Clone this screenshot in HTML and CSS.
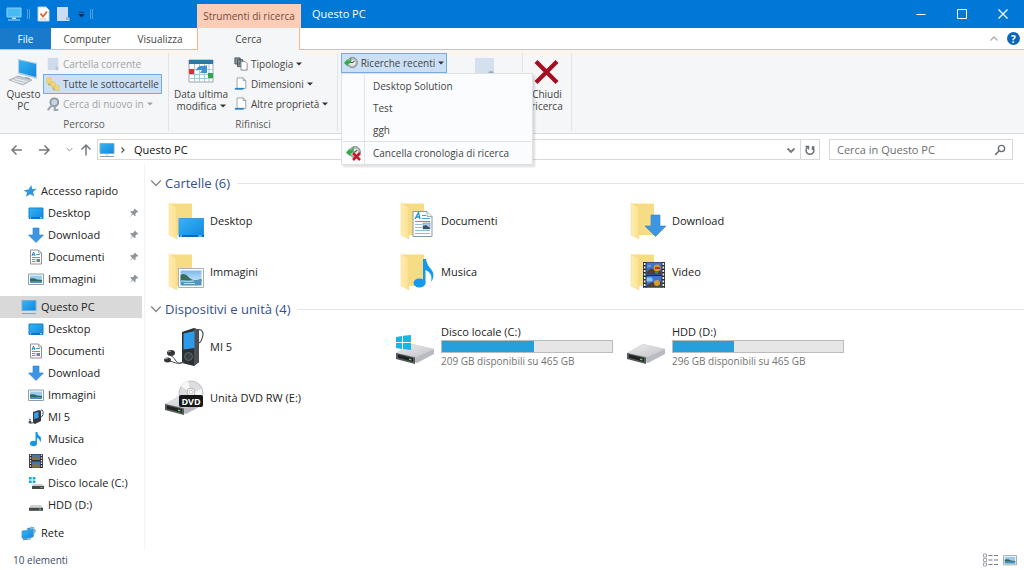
FILE: index.html
```html
<!DOCTYPE html>
<html lang="it">
<head>
<meta charset="utf-8">
<title>Questo PC</title>
<link rel="stylesheet" href="styles.css">
</head>
<body>
<svg class="sprite" aria-hidden="true">
  <defs>
    <linearGradient id="g-blue" x1="0" y1="0" x2="1" y2="1"><stop offset="0" stop-color="#35b4f5"/><stop offset="1" stop-color="#1287dc"/></linearGradient>
    <linearGradient id="g-folder" x1="0" y1="0" x2="1" y2="0"><stop offset="0" stop-color="#ffedb2"/><stop offset="1" stop-color="#fbe08d"/></linearGradient>
    <linearGradient id="g-drive" x1="0" y1="0" x2="1" y2="1"><stop offset="0" stop-color="#ededee"/><stop offset="1" stop-color="#c2c3c7"/></linearGradient>
    <linearGradient id="g-sky" x1="0" y1="0" x2="0" y2="1"><stop offset="0" stop-color="#7db9ec"/><stop offset="1" stop-color="#e3f2fa"/></linearGradient>
  </defs>
  <symbol id="i-pc" viewBox="0 0 16 16"><path d="M1 1.500h14v10H1z" fill="url(#g-blue)" stroke="#7aaed0" stroke-width="1"/><path d="M6 12h4v1.500H6z" fill="#d3e3ec"/><path d="M1 14.500h14" stroke="#8aa0b0"/></symbol>
  <symbol id="i-desktop" viewBox="0 0 16 16"><path d="M1 3h14v10.500H1z" fill="url(#g-blue)" stroke="#1582cf"/><path d="M1.500 12.800h13" stroke="#0a5ea6"/><path d="M2 12.800h1M12 12.800h2" stroke="#d8efff"/></symbol>
  <symbol id="i-down" viewBox="0 0 16 16"><path d="M5 1h6v7h4.500L8 15.500.5 8H5z" fill="#3d96e4" stroke="#2c82cf" stroke-width=".6"/></symbol>
  <symbol id="i-doc" viewBox="0 0 16 16"><path d="M2.500 1h8l3 3v11h-11z" fill="#fff" stroke="#8b9296"/><path d="M10.500 1v3h3" fill="none" stroke="#8b9296" stroke-width=".7"/><path d="M4 7l1.500-4L7 7M4.500 5.700h2" fill="none" stroke="#2489bd"/><path d="M8 5.500h4M4 8.500h8M4 10.500h3.500M4 12.500h3.500" stroke="#4aa0c7"/><path d="M8.500 10h3.500v3H8.500z" fill="#568aa6"/></symbol>
  <symbol id="i-pic" viewBox="0 0 16 16"><path d="M.5 3h15v10.500H.5z" fill="#fff" stroke="#8f9da8"/><path d="M2 4.500h12v7.500H2z" fill="#9accf0"/><path d="M2 7.500q4-1 7 1l5 .5v1H2z" fill="#32675f"/><path d="M2 10h12v2H2z" fill="#4791bf"/></symbol>
  <symbol id="i-player" viewBox="0 0 16 16"><path d="M5 3l6-2 2 1v10l-6 3-2-1z" fill="#333a43"/><path d="M6 4l4.500-1.300v6L6 10z" fill="#369de8"/><path d="M12 3q2-4 3-.500t-2 6M1 13q1 2 5 .5M1 10l2 1" fill="none" stroke="#465058"/><circle cx="2" cy="13" r="1.500" fill="#465058"/></symbol>
  <symbol id="i-note" viewBox="0 0 16 16"><ellipse cx="5.500" cy="12.500" rx="3.500" ry="2.700" fill="#1996e5"/><path d="M7.500 1h1.700q.5 3 3 4.500 2 2.500-.2 6 0-4-3-4.500v5.500H7.500z" fill="#1996e5"/></symbol>
  <symbol id="i-film" viewBox="0 0 16 16"><path d="M1 1h14v14H1z" fill="#303238"/><path d="M4 1.500h8V7H4zM4 8.500h8v6H4z" fill="#3d78bf"/><path d="M4 5l3-2 5 3v1H4zM4 13l3-3 5 3v1.500H4z" fill="#8a713d"/><path d="M2.500 1.500v14M13.500 1.500v14" stroke="#e6e7e8" stroke-width="1.300" stroke-dasharray="1.500 1.200"/></symbol>
  <symbol id="i-hdd" viewBox="0 0 16 16"><path d="M3 8h10l2 3H1z" fill="#d0d1d2"/><path d="M1 10.800h14v3H1z" fill="#45484b"/><path d="M11 12.300h2" stroke="#62d25b"/></symbol>
  <symbol id="i-cdisk" viewBox="0 0 16 16"><path d="M1 2h2.700v2.500H1zM4.700 2h2.700v2.500H4.700zM1 5.500h2.700V8H1zM4.700 5.500h2.700V8H4.700z" fill="#14a7de"/><path d="M5 9h9l2 2H4z" fill="#cecfd0"/><path d="M4 11h12v3H4z" fill="#45484b"/><path d="M12.500 12.500h2" stroke="#62d25b"/></symbol>
  <symbol id="i-net" viewBox="0 0 16 16"><path d="M6 3l7-1v9l-4 2z" fill="#4a9bcd"/><path d="M10 1l5.500 4.500L12 11l-3-5z" fill="#83bbd5"/><path d="M1 6l11-1.500v7.500l-9 2-2-1z" fill="url(#g-blue)" stroke="#3b8fc4" stroke-width=".6"/><path d="M2 14.800l8-1" stroke="#5f8aa3"/></symbol>
  <symbol id="i-star" viewBox="0 0 16 16"><path d="M9.500 1l1 4.800 5-.3-4 3.500 1.300 5-4.600-2.400-4.700 3 1-5L.8 7l5.400-.8z" fill="#3596e0"/></symbol>
  <symbol id="i-pin" viewBox="0 0 16 16"><path d="M9.500 1l5.500 5.500-1.500.8-1-.5-2.300 2.400.3 3-1.300.8-3-3L1 15l4-6-3-3 1-1.200 3 .2 2.500-2.300-.4-1z" fill="#8c9399"/></symbol>
  <symbol id="i-folder" viewBox="0 0 40 40"><path d="M4 2h23v32H10z" fill="#f7dc86"/><path d="M4 2l8 4v32l-8-4z" fill="url(#g-folder)" stroke="#efd27c" stroke-width=".4"/><path d="M4 2h23v1H6z" fill="#fff0b8"/></symbol>
  <symbol id="i-drive" viewBox="0 0 40 24"><path d="M1 11L17 2l22 5v5l-17 9L1 16z" fill="#b9bbc0"/><path d="M1 11L18 2l21 5-17 8z" fill="url(#g-drive)"/><path d="M1 11l19 4.500V22L1 17z" fill="#55585a"/><path d="M3 12.500l15 3.800v3.500L3 15.800z" fill="#202325"/><path d="M14 17.200l2.500.600" stroke="#5bdc57" stroke-width="1.200"/></symbol>
  <symbol id="i-caret" viewBox="0 0 6 4"><path d="M0 .5h6L3 3.500z" fill="currentColor"/></symbol>
  <symbol id="i-chev" viewBox="0 0 10 10"><path d="M1 3l4 4 4-4" fill="none" stroke="currentColor" stroke-width="1.200"/></symbol>
  <symbol id="i-page" viewBox="0 0 16 16"><path d="M3.500 1h7l3 3v9h-10z" fill="#fff" stroke="#8d9aa6"/><path d="M10.500 1v3h3" fill="none" stroke="#8d9aa6"/><path d="M1 12.500h10v2H1z" fill="#2b83bd"/></symbol>
  <symbol id="i-history" viewBox="0 0 16 16"><circle cx="9.500" cy="7.500" r="5.800" fill="#b8bdc0" stroke="#788086"/><circle cx="9.500" cy="7.500" r="3.600" fill="#e7e9ea"/><path d="M9.500 7.500l2.500-2M9.500 7.500H7" stroke="#555" stroke-width="1.200"/><path d="M0 8l4-4.500V6q3-1 4.500-4.500Q9 8 4.500 9.500V12z" fill="#32ab45"/></symbol>
  <symbol id="i-mag" viewBox="0 0 16 16"><circle cx="10" cy="6" r="4.200" fill="none" stroke="currentColor" stroke-width="1.800"/><path d="M7 9l-5.500 5.500" stroke="currentColor" stroke-width="2"/></symbol>
</svg>

<div class="window">
  <header class="titlebar">
    <div class="quick">
      <svg class="ic16" viewBox="0 0 16 16"><path d="M1 2h14v9H1z" fill="#48baf4" stroke="#8bd2fb"/><path d="M6 11.500h4V13H6zM2 13.500h12v1H2z" fill="#b9e0f6"/></svg>
      <span class="bar"></span>
      <button type="button" aria-label="Proprietà"><svg class="ic16" viewBox="0 0 16 16"><path d="M3 1h8l3 3v11H3z" fill="#fff" stroke="#c2d4df"/><path d="M5.500 7.500l2.500 3 4-5" fill="none" stroke="#e76132" stroke-width="1.800"/><path d="M5 13h7" stroke="#b8c6d2"/></svg></button>
      <button type="button" aria-label="Nuova cartella"><svg class="ic16" viewBox="0 0 16 16"><path d="M1 1h11v10l1.500 1v3H1z" fill="#cadcf0"/><path d="M10 11h3v3h-3z" fill="#9fb4ce"/></svg></button>
      <button type="button" class="qmenu" aria-label="Personalizza"><svg viewBox="0 0 8 8"><path d="M1 1.500h6" stroke="#133d65"/><path d="M0 3.500h8l-4 4z" fill="#102f50"/></svg></button>
      <span class="bar"></span>
    </div>
    <div class="context">Strumenti di ricerca</div>
    <h1 class="title">Questo PC</h1>
    <div class="controls">
      <button type="button" aria-label="Riduci"><svg viewBox="0 0 10 10"><path d="M.5 5.500h9" stroke="#fff"/></svg></button>
      <button type="button" aria-label="Ingrandisci"><svg viewBox="0 0 10 10"><path d="M.5.5h9v9h-9z" stroke="#fff" fill="none"/></svg></button>
      <button type="button" aria-label="Chiudi"><svg viewBox="0 0 10 10"><path d="M.5.5l9 9m0-9l-9 9" stroke="#fff" stroke-width="1.200"/></svg></button>
    </div>
  </header>

  <nav class="tabs">
    <button type="button" class="tab file">File</button>
    <button type="button" class="tab computer">Computer</button>
    <button type="button" class="tab view">Visualizza</button>
    <button type="button" class="tab search-tab">Cerca</button>
    <div class="tabs-end">
      <button type="button" aria-label="Riduci barra multifunzione"><svg class="ic10" viewBox="0 0 10 10"><path d="M1.500 6.500L5 3l3.500 3.500" fill="none" stroke="#a9adb0" stroke-width="1.300"/></svg></button>
      <button type="button" class="help" aria-label="Guida">?</button>
    </div>
  </nav>

  <section class="ribbon">
    <div class="group percorso">
      <div class="group-body">
        <button type="button" class="big pc">
          <svg class="ic32" viewBox="0 0 32 32"><path d="M10 3l19 4v16l-19-5z" fill="#b7cedc"/><path d="M11 4l17 4v13l-17-4.500z" fill="url(#g-blue)"/><path d="M17 21l5 1v3h-6z" fill="#98a7b1"/><path d="M1 24l9-4 14 4-9 5z" fill="#c4cdd4" stroke="#99a5ae" stroke-width=".7"/><path d="M4 24.500l12 3M7 22.700l12 3" stroke="#f5f8fa" stroke-width=".8"/></svg>
          <span>Questo<br>PC</span>
        </button>
        <div class="stack">
          <button type="button" class="cmd off"><svg class="ic14" viewBox="0 0 16 16"><path d="M2 1h12v14H2z" fill="#cfdaea"/><path d="M11 11h3v4h-3z" fill="#b5c4d9"/></svg>Cartella corrente</button>
          <button type="button" class="cmd on"><svg class="ic14" viewBox="0 0 16 16"><path d="M3 6v3h3M8 10v4h3" fill="none" stroke="#b39a55"/><path d="M1 1h4.500v6H1zM6 5.500h4.500v5.500H6zM10.500 10H15v5.500h-4.500z" fill="#f7d766" stroke="#e4ba40" stroke-width=".5"/></svg>Tutte le sottocartelle</button>
          <button type="button" class="cmd off"><svg class="ic14" viewBox="0 0 16 16"><circle cx="9.500" cy="6" r="4.500" fill="#cbd4df" stroke="#8994a5" stroke-width="2"/><path d="M7 9l-5 6M10 10v5h4" stroke="#9aa5b5" stroke-width="2.500" fill="none"/></svg>Cerca di nuovo in<svg class="caret"><use href="#i-caret"/></svg></button>
        </div>
      </div>
      <div class="group-label">Percorso</div>
    </div>
    <div class="group rifinisci">
      <div class="group-body">
        <button type="button" class="big date">
          <svg class="ic32" viewBox="0 0 32 32"><path d="M4 4h24v22H4z" fill="#fff" stroke="#9aa5ac"/><path d="M4 4h24v4H4z" fill="#2e75a8"/><path d="M5 13.500h22M5 18.500h22M5 22.500h22M9.500 8v18M14.500 8v18M19.500 8v18M24 8v18" stroke="#a8c8d3"/><path d="M11 15q1-6 9-5l2-1v8h-7l2-3q-3-1-6 1z" fill="#3e91d0"/><path d="M4 13h5v5H4z" fill="#d93434"/><path d="M23 17h5v5h-5z" fill="#2ea64c"/></svg>
          <span>Data ultima<br>modifica<svg class="caret"><use href="#i-caret"/></svg></span>
        </button>
        <div class="stack">
          <button type="button" class="cmd"><svg class="ic14" viewBox="0 0 16 16"><path d="M1 1h6v7H1zM4 3h6v8H4z" fill="#8b959e" stroke="#495158"/><path d="M8 5h4.500L15 7.500V15H8z" fill="#fff" stroke="#778590"/></svg>Tipologia<svg class="caret"><use href="#i-caret"/></svg></button>
          <button type="button" class="cmd"><svg class="ic14"><use href="#i-page"/></svg>Dimensioni<svg class="caret"><use href="#i-caret"/></svg></button>
          <button type="button" class="cmd"><svg class="ic14"><use href="#i-page"/></svg>Altre proprietà<svg class="caret"><use href="#i-caret"/></svg></button>
        </div>
      </div>
      <div class="group-label">Rifinisci</div>
    </div>
    <div class="group opzioni">
      <div class="recent">
        <button type="button" class="cmd on" aria-expanded="true"><svg class="ic14"><use href="#i-history"/></svg>Ricerche recenti<svg class="caret"><use href="#i-caret"/></svg></button>
        <div class="menu" role="menu">
          <button type="button" role="menuitem"><span class="slot"></span>Desktop Solution</button>
          <button type="button" role="menuitem"><span class="slot"></span>Test</button>
          <button type="button" role="menuitem"><span class="slot"></span>ggh</button>
          <button type="button" role="menuitem" class="clear"><span class="slot"><svg class="ic16" viewBox="0 0 16 16"><use href="#i-history" width="15" height="15"/><path d="M7 8l7 7m0-7l-7 7" stroke="#c81727" stroke-width="2.500"/></svg></span>Cancella cronologia di ricerca</button>
        </div>
      </div>
      <svg class="save" viewBox="0 0 20 20"><path d="M0 0h19v20H0z" fill="#d5e0ef"/><circle cx="16" cy="16" r="3" fill="#9cabbd"/></svg>
    </div>
    <div class="group chiudi">
      <button type="button" class="big">
        <svg class="ic32" viewBox="0 0 32 32"><path d="M5 5.500l21 21M26 5.500l-21 21" stroke="#a30f22" stroke-width="4.200"/></svg>
        <span>Chiudi<br>ricerca</span>
      </button>
    </div>
  </section>

  <div class="navbar">
    <button type="button" aria-label="Indietro"><svg class="ic14" viewBox="0 0 14 14"><path d="M12 7H2m4.500-4.500L2 7l4.500 4.500" fill="none" stroke="#74797d" stroke-width="1.500"/></svg></button>
    <button type="button" aria-label="Avanti"><svg class="ic14" viewBox="0 0 14 14"><path d="M2 7h10M7.500 2.500L12 7l-4.500 4.500" fill="none" stroke="#74797d" stroke-width="1.500"/></svg></button>
    <button type="button" class="hist" aria-label="Percorsi recenti"><svg class="ic6"><use href="#i-chev"/></svg></button>
    <button type="button" class="up" aria-label="Su"><svg class="ic14" viewBox="0 0 14 14"><path d="M7 12.500V2M2.500 6.500L7 2l4.500 4.500" fill="none" stroke="#74797d" stroke-width="1.500"/></svg></button>
    <div class="address">
      <svg class="ic18"><use href="#i-pc"/></svg>
      <svg class="crumb" viewBox="0 0 6 8"><path d="M1.500 1.500L4 4 1.500 6.500" fill="none" stroke="#555" stroke-width="1.200"/></svg>
      <span class="path">Questo PC</span>
      <button type="button" aria-label="Percorsi precedenti"><svg class="ic10" viewBox="0 0 10 10"><path d="M1.500 3.500L5 7l3.500-3.500" fill="none" stroke="#74797d" stroke-width="1.800"/></svg></button>
      <button type="button" class="refresh" aria-label="Aggiorna"><svg class="ic12" viewBox="0 0 12 12"><path d="M8.500 3.200A4 4 0 1 1 3.500 3.200M1.500 2.500h3v3M8.500 6V3h2" fill="none" stroke="#6a6e72" stroke-width="1.400"/></svg></button>
    </div>
    <label class="search">
      <input type="search" placeholder="Cerca in Questo PC" aria-label="Cerca in Questo PC">
      <svg class="ic12"><use href="#i-mag"/></svg>
    </label>
  </div>

  <div class="body">
    <nav class="side">
      <ul>
        <li><a href="#" class="root quickroot"><svg class="ic14"><use href="#i-star"/></svg>Accesso rapido</a></li>
        <li><a href="#"><svg class="ic16"><use href="#i-desktop"/></svg>Desktop<svg class="pin"><use href="#i-pin"/></svg></a></li>
        <li><a href="#"><svg class="ic16"><use href="#i-down"/></svg>Download<svg class="pin"><use href="#i-pin"/></svg></a></li>
        <li><a href="#"><svg class="ic16"><use href="#i-doc"/></svg>Documenti<svg class="pin"><use href="#i-pin"/></svg></a></li>
        <li><a href="#"><svg class="ic16"><use href="#i-pic"/></svg>Immagini<svg class="pin"><use href="#i-pin"/></svg></a></li>
      </ul>
      <ul>
        <li><a href="#" class="root current"><svg class="ic16"><use href="#i-pc"/></svg>Questo PC</a></li>
        <li><a href="#"><svg class="ic16"><use href="#i-desktop"/></svg>Desktop</a></li>
        <li><a href="#"><svg class="ic16"><use href="#i-doc"/></svg>Documenti</a></li>
        <li><a href="#"><svg class="ic16"><use href="#i-down"/></svg>Download</a></li>
        <li><a href="#"><svg class="ic16"><use href="#i-pic"/></svg>Immagini</a></li>
        <li><a href="#"><svg class="ic16"><use href="#i-player"/></svg>MI 5</a></li>
        <li><a href="#"><svg class="ic16"><use href="#i-note"/></svg>Musica</a></li>
        <li><a href="#"><svg class="ic16"><use href="#i-film"/></svg>Video</a></li>
        <li><a href="#"><svg class="ic16"><use href="#i-cdisk"/></svg>Disco locale (C:)</a></li>
        <li><a href="#"><svg class="ic16"><use href="#i-hdd"/></svg>HDD (D:)</a></li>
      </ul>
      <ul>
        <li><a href="#" class="root"><svg class="ic16"><use href="#i-net"/></svg>Rete</a></li>
      </ul>
    </nav>

    <main class="content">
      <h2><svg class="ic12"><use href="#i-chev"/></svg>Cartelle (6)</h2>
      <div class="grid">
        <div class="item"><svg class="ic40" viewBox="-1 0 40 40"><use href="#i-folder" width="40" height="40"/><path d="M14 17.500h25v18H14z" fill="url(#g-blue)" stroke="#3c9cdc"/><path d="M14 35h25" stroke="#07508c" stroke-width="1.300"/><path d="M15 35h2M33 35h4" stroke="#bbe3ff"/></svg><span>Desktop</span></div>
        <div class="item"><svg class="ic40" viewBox="-2 0 40 40"><use href="#i-folder" width="40" height="40"/><path d="M16 10.500h14l5 5v20H16z" fill="#fff" stroke="#8d979f"/><path d="M30 10.500v5h5" fill="#eaf0f3" stroke="#8d979f" stroke-width=".7"/><path d="M18 18l3.500-6.500L23 18M19 16h4" fill="none" stroke="#2691d2" stroke-width="1.300"/><path d="M25 14.500h4M25 17.500h8M18 20.500h15" stroke="#40a3d7" stroke-width="1.200"/><path d="M18 23.500h7M18 26.500h7M18 29.500h15M18 32.500h15" stroke="#93bdd2"/><path d="M26 22h7v6h-7z" fill="#a9cfe8" stroke="#60869b" stroke-width=".6"/><path d="M26 25l3-1 4 3v1h-7z" fill="#345469"/></svg><span>Documenti</span></div>
        <div class="item"><svg class="ic40" viewBox="-1 0 40 40"><use href="#i-folder" width="40" height="40"/><path d="M24 14h9v11h6L28.500 35.500 18 25h6z" fill="#3c96e4" stroke="#2d83ce" stroke-width=".6"/></svg><span>Download</span></div>
        <div class="item"><svg class="ic40" viewBox="-1 0 40 40"><use href="#i-folder" width="40" height="40"/><path d="M13.500 16.500h25v19h-25z" fill="#fff" stroke="#a6b2bb"/><path d="M15.500 18.500h21v15h-21z" fill="url(#g-sky)"/><path d="M15.500 23q4-3 8 2t13 2v2h-21z" fill="#386f5a"/><path d="M15.500 28h21v5.500h-21z" fill="#5096bb"/><path d="M16 29q8 1 13 0M19 31.500h11" stroke="#b9e3ef" fill="none"/></svg><span>Immagini</span></div>
        <div class="item"><svg class="ic40" viewBox="-2 0 40 40"><use href="#i-folder" width="40" height="40"/><ellipse cx="22.500" cy="31" rx="6" ry="4.500" fill="#1599ed"/><path d="M26 7h3q1 6 5 10 5 6 0 13 2-9-5.500-12v13H26z" fill="#1599ed"/></svg><span>Musica</span></div>
        <div class="item"><svg class="ic40" viewBox="-1 0 40 40"><use href="#i-folder" width="40" height="40"/><path d="M16 10h22v26H16z" fill="#292c31"/><path d="M19.500 10.500h15v12h-15zM19.500 24h15v12h-15z" fill="#3e76cf"/><path d="M20 20q3-5 6-3l3-2 5 4v3H20zM20 33l5-3 4 2 5-3v6H20z" fill="#553c35"/><circle cx="30" cy="16" r="3.500" fill="#d39a26"/><path d="M28 16h5" stroke="#ba3030" stroke-width="2"/><path d="M28 20l3 1" stroke="#2c9a4b" stroke-width="2"/><circle cx="30" cy="31" r="3" fill="#d3a02d"/><path d="M20 26h5v3h-5zM20 14h4" fill="#8fc2ef" stroke="#8fc2ef"/><path d="M17.700 11v25M36.300 11v25" stroke="#eff0f0" stroke-width="1.700" stroke-dasharray="2 1.500"/></svg><span>Video</span></div>
      </div>
      <h2><svg class="ic12"><use href="#i-chev"/></svg>Dispositivi e unità (4)</h2>
      <div class="grid">
        <div class="item"><svg class="ic40" viewBox="0 0 40 40"><path d="M31 8q1-7 6-5 4 3 0 11-2 3-4 2" fill="none" stroke="#4d5356" stroke-width="1.200"/><path d="M18 5l12-4 5 2v32l-5 4-12-3z" fill="#2c2f33"/><path d="M30 1l5 2v32l-5 4z" fill="#4b5055"/><path d="M19.500 6.500l11-2.500v17l-11 1.500z" fill="#2e9bea"/><circle cx="24.500" cy="29.500" r="4" fill="#3c4146" stroke="#61676b"/><path d="M6 28q4 2 6 6t8 1M4 33q4 2 8 3t8-1" fill="none" stroke="#4d5356"/><ellipse cx="7" cy="26" rx="4" ry="3" fill="#33373a"/><ellipse cx="3.500" cy="33" rx="3.500" ry="2.500" fill="#33373a"/><path d="M4 25l3-1M1 32l3-1" stroke="#a3a8ab"/></svg><span>MI 5</span></div>
        <div class="item"><svg class="ic40" viewBox="0 0 40 40"><use href="#i-drive" y="15" width="40" height="24"/><path d="M1 10l6-1v6H1zM8 8.800L16 8v7H8zM1 16h6v6l-6-1zM8 16h8v7l-8-1z" fill="#18b5e8"/></svg><div class="disk"><span>Disco locale (C:)</span><div class="usage" role="progressbar" aria-label="Disco locale (C:)" aria-valuenow="54"><div class="fill" style="width:54%"></div></div><small>209 GB disponibili su 465 GB</small></div></div>
        <div class="item"><svg class="ic40" viewBox="0 0 40 40"><use href="#i-drive" y="15" width="40" height="24"/></svg><div class="disk"><span>HDD (D:)</span><div class="usage" role="progressbar" aria-label="HDD (D:)" aria-valuenow="36"><div class="fill" style="width:36%"></div></div><small>296 GB disponibili su 465 GB</small></div></div>
        <div class="item"><svg class="ic40" viewBox="0 0 40 40"><use href="#i-drive" y="15" width="40" height="24"/><circle cx="27" cy="15" r="12" fill="#dcdddf" stroke="#c0c2c5"/><path d="M27 15L17 8q3-4 7-5zM27 15l11-4v7z" fill="#f8f8f9"/><circle cx="27" cy="14" r="4" fill="#eee" stroke="#b9bbbe"/><circle cx="27" cy="14" r="1.700" fill="#fff" stroke="#aaa" stroke-width=".5"/><rect x="15" y="17" width="24" height="12" rx="2" fill="#171717"/><text class="dvd" x="27" y="26.500" text-anchor="middle">DVD</text></svg><span>Unità DVD RW (E:)</span></div>
      </div>
    </main>
  </div>

  <footer class="status">
    <span>10 elementi</span>
    <div class="views">
      <button type="button" aria-label="Dettagli"><svg class="ic16" viewBox="0 0 16 16"><path d="M1.500 2h3v3h-3zM1.500 6.500h3v3h-3zM1.500 11h3v3h-3z" fill="#fff" stroke="#8d9297" stroke-width=".8"/><path d="M6.500 3.500h4M6.500 8h4M6.500 12.500h4M12 3.500h4M12 8h4M12 12.500h4" stroke="#757b80"/></svg></button>
      <button type="button" aria-label="Icone grandi"><svg class="ic14"><use href="#i-pic"/></svg></button>
    </div>
  </footer>
</div>
</body>
</html>
```
FILE: styles.css
```css
* { box-sizing: border-box; }
body {
  margin: 0;
  font: 11px/14px "Open Sans", "Noto Sans", sans-serif;
  color: #222;
  background: #fff;
}
button {
  font: inherit;
  color: inherit;
  border: 0;
  padding: 0;
  margin: 0;
  background: none;
  display: flex;
  align-items: center;
  justify-content: center;
}
ul { list-style: none; margin: 0; padding: 0; }
h1, h2 { margin: 0; font-weight: 400; }
svg { flex: none; display: block; }
.sprite { position: absolute; width: 0; height: 0; }
.ic6 { width: 7px; height: 7px; }
.ic10 { width: 10px; height: 10px; }
.ic12 { width: 12px; height: 12px; }
.ic14 { width: 14px; height: 14px; }
.ic16 { width: 16px; height: 16px; }
.ic18 { width: 18px; height: 16px; }
.ic32 { width: 32px; height: 32px; }
.ic40 { width: 40px; height: 40px; }
.caret { width: 6px; height: 4px; color: #333; }

.window { min-height: 100vh; display: flex; flex-direction: column; }

/* Title bar */
.titlebar { display: flex; height: 28px; background: #0078d7; color: #fff; }
.quick { width: 197px; padding-left: 6px; display: flex; align-items: center; gap: 5px; }
.bar { width: 3px; height: 10px; border: solid #519fdc; border-width: 0 1px; }
.quick .qmenu { width: 8px; }
.qmenu svg { width: 7px; height: 7px; }
.context {
  width: 104px;
  margin-top: 4px;
  display: flex;
  align-items: center;
  justify-content: center;
  background: #fdccb6;
  color: #704c42;
  font-size: 10px;
}
.title { flex: 1; padding-left: 11px; font-size: 11px; line-height: 28px; }
.controls { display: flex; padding-right: 1px; }
.controls button { width: 41px; }
.controls svg { width: 10px; height: 10px; }

/* Tabs */
.tabs {
  display: flex;
  height: 22px;
  font-size: 10px;
  border-bottom: 1px solid #efb891;
  color: #444;
}
.tab.file { width: 51px; background: #1979ca; color: #fff; }
.tab.computer { width: 72px; }
.tab.view { width: 74px; }
.tab.search-tab {
  width: 103px;
  height: 22px;
  background: #f5f6f7;
  border: solid #efb891;
  border-width: 0 1px;
}
.tabs-end { margin-left: auto; padding-right: 4px; display: flex; align-items: center; gap: 8px; }
.help {
  width: 13px;
  height: 13px;
  border-radius: 50%;
  background: #0a66b9;
  color: #fff;
  font-size: 10px;
  font-weight: 700;
}

/* Ribbon */
.ribbon {
  display: flex;
  height: 84px;
  padding: 3px 0 2px;
  background: #f5f6f7;
  border-bottom: 1px solid #dadbdc;
  font-size: 10px;
  color: #444;
}
.group { border-right: 1px solid #e2e3e4; display: flex; flex-direction: column; }
.group-body { display: flex; flex: 1; }
.group-label { text-align: center; line-height: 14px; color: #5a5a5a; }
.percorso { width: 169px; }
.rifinisci { width: 169px; }
.opzioni { width: 185px; padding: 0 0 0 3px; flex-direction: row; align-items: flex-start; }
.chiudi { width: 49px; }
.big { flex-direction: column; justify-content: flex-start; line-height: 12px; padding-top: 3px; }
.big span { text-align: center; }
.big .caret { display: inline-block; margin: 0 0 2px 3px; }
.pc { width: 43px; padding-left: 4px; }
.date { width: 62px; padding-left: 2px; }
.chiudi .big { width: 100%; }
.stack { display: flex; flex-direction: column; align-items: flex-start; padding-top: 1px; }
.cmd {
  height: 20px;
  padding: 0 2px;
  gap: 3px;
  border: 1px solid transparent;
  white-space: nowrap;
}
.cmd.off { color: #a0a3a8; }
.cmd.off .caret { color: #a0a3a8; }
.cmd.on { background: #cce0f5; border-color: #78aadc; }
.recent { position: relative; width: 106px; }
.recent .cmd { width: 100%; }
.save { width: 20px; height: 20px; margin: 5px 0 0 28px; }

.menu {
  position: absolute;
  z-index: 2;
  top: 20px;
  left: 0;
  width: 192px;
  padding: 1px;
  border: 1px solid #e0e1e3;
  background: #fbfcfd;
  box-shadow: 2px 2px 2px #00000022;
}
.menu button { width: 100%; height: 22px; justify-content: flex-start; }
.slot {
  width: 22px;
  height: 22px;
  margin-right: 8px;
  border-right: 1px solid #e2e4e6;
  display: flex;
  align-items: center;
  justify-content: center;
}
.menu .clear { border-top: 1px solid #dfe2e5; }

/* Address row */
.navbar { display: flex; align-items: center; padding: 5px 11px 4px 10px; }
.navbar > button { width: 27px; height: 20px; justify-content: flex-start; }
.navbar > .hist { width: 10px; justify-content: center; color: #777; }
.navbar > .up { width: 23px; justify-content: center; }
.address {
  flex: 1;
  height: 21px;
  margin-right: 9px;
  border: 1px solid #d9d9d9;
  display: flex;
  align-items: center;
  color: #333;
}
.crumb { width: 6px; height: 8px; margin: 0 8px 0 4px; }
.path { flex: 1; color: #111; }
.address button { width: 19px; height: 19px; }
.address .refresh { border-left: 1px solid #d9d9d9; }
.search {
  width: 184px;
  height: 21px;
  border: 1px solid #d9d9d9;
  display: flex;
  align-items: center;
  padding: 0 6px 0 7px;
  color: #6a6e72;
}
.search input { flex: 1; min-width: 0; border: 0; padding: 0; font: inherit; background: none; outline: 0; }
.search input::placeholder { color: #6d6d6d; opacity: 1; }

/* Panes */
.body { flex: 1; display: flex; }
.side { width: 145px; padding-top: 16px; border-right: 1px solid #f3f3f3; }
.side ul { margin-bottom: 6px; }
.side a {
  height: 22px;
  margin-right: 2px;
  padding: 0 3px 0 28px;
  display: flex;
  align-items: center;
  gap: 4px;
  color: inherit;
  text-decoration: none;
  white-space: nowrap;
}
.side .root { padding-left: 21px; }
.side .quickroot { padding-left: 23px; }
.side .current { background: #d9d9d9; }
.pin { width: 10px; height: 10px; margin-left: auto; }

.content { flex: 1; padding: 7px 0 0 5px; }
.content h2 {
  height: 24px;
  display: flex;
  align-items: center;
  gap: 3px;
  font-size: 13px;
  color: #34508c;
}
.content h2 svg { color: #888; }
.content h2::after { content: ""; flex: 1; height: 1px; margin-left: 4px; background: #e6e6e6; }
.grid { display: grid; grid-template-columns: repeat(auto-fill, 231px); padding-left: 14px; }
.item { height: 51px; display: flex; align-items: center; gap: 6px; }
.disk { width: 172px; display: flex; flex-direction: column; line-height: 14px; }
.disk small { font-size: 10px; color: #737373; }
.usage { height: 13px; margin: 1px 0; border: 1px solid #bcbcbc; background: #e6e6e6; }
.fill { height: 100%; background: #26a0da; }
.dvd { font: 700 9px "Open Sans", sans-serif; fill: #fff; }

.status {
  height: 20px;
  padding: 0 7px 0 13px;
  display: flex;
  align-items: center;
  justify-content: space-between;
  font-size: 10px;
  color: #3a4a68;
}
.views { display: flex; gap: 5px; }
```
